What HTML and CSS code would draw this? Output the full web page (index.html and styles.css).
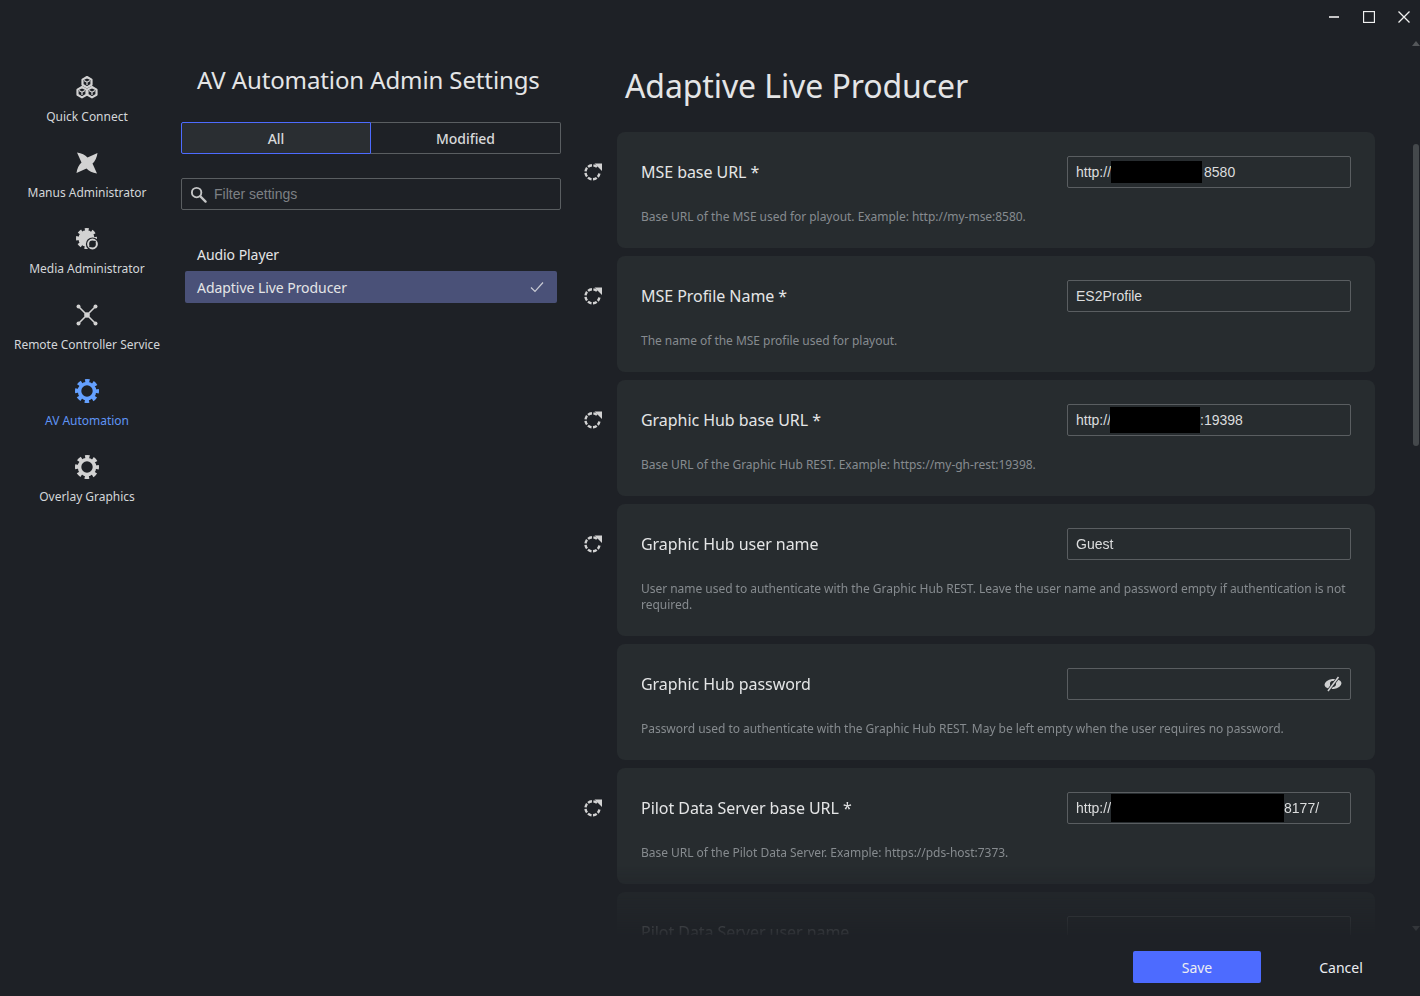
FILE: index.html
```html
<!DOCTYPE html>
<html lang="en">
<head>
  <meta charset="UTF-8">
  <title>AV Automation Admin Settings</title>
  <link rel="stylesheet" href="styles.css">
</head>
<body>

<svg class="defs" width="0" height="0">
  <symbol id="gear" viewBox="0 0 24 24">
    <circle cx="12" cy="12" r="7.5" fill="none" stroke="currentColor" stroke-width="3.6"/>
    <circle cx="12" cy="12" r="10.2" fill="none" stroke="currentColor" stroke-width="3.6" stroke-dasharray="4.4 3.61" stroke-dashoffset="2.2"/>
  </symbol>
  <symbol id="reset" viewBox="0 0 18 18">
    <path d="M13 3.9A7 7 0 1 0 15.4 10.5" fill="none" stroke="currentColor" stroke-width="2.4" stroke-dasharray="4 1.4"/>
    <path d="M10.500 0.500H18V8Z" fill="currentColor"/>
  </symbol>
</svg>

<div class="window">
  <div class="titlebar">
    <svg class="win-btn" viewBox="0 0 12 12"><path d="M1 6H11" stroke-width="1.6"/></svg>
    <svg class="win-btn" viewBox="0 0 12 12"><rect x="0.5" y="0.5" width="11" height="11"/></svg>
    <svg class="win-btn" viewBox="0 0 12 12"><path d="M0.5 0.5L11.5 11.5M11.5 0.5L0.5 11.5"/></svg>
  </div>

  <div class="content">
    <!-- Navegacion -->
    <nav class="nav">
      <div class="nav-item">
        <svg class="nav-icon" viewBox="0 0 24 24">
          <g fill="none" stroke="currentColor" stroke-width="2.2" stroke-linejoin="round">
            <path d="M12 2L16.5 4.6V9.8L12 12.4L7.5 9.8V4.6Z"/>
            <path d="M7 12L11.5 14.6V19.8L7 22.4L2.5 19.8V14.6Z"/>
            <path d="M17 12L21.5 14.6V19.8L17 22.4L12.5 19.8V14.6Z"/>
            <path d="M9 5.5L12 7.2L15 5.5M12 7.2V10M4 15.5L7 17.2L10 15.5M7 17.2V20M14 15.5L17 17.2L20 15.5M17 17.2V20" stroke-width="1.2"/>
          </g>
        </svg>
        <span>Quick Connect</span>
      </div>
      <div class="nav-item">
        <svg class="nav-icon" viewBox="0 0 24 24">
          <path fill="currentColor" d="M2 1.500Q9 2.500 12.500 6.500L22.500 2Q21.500 9 17.500 12.500L22 22.500Q15 21.500 11.500 17.500L1.500 22Q2.500 15 6.500 11.500Z"/>
        </svg>
        <span>Manus Administrator</span>
      </div>
      <div class="nav-item">
        <svg class="nav-icon" viewBox="0 0 24 24">
          <use href="#gear" width="21" height="21" x="1" y="1"/>
          <circle cx="11.500" cy="11.500" r="7" fill="currentColor"/>
          <circle cx="17.500" cy="17" r="6.600" fill="#1e2126"/>
          <circle cx="17.500" cy="17" r="4.400" fill="none" stroke="currentColor" stroke-width="2"/>
          <path d="M14.500 20L20.500 14" stroke="#1e2126" stroke-width="1.400"/>
        </svg>
        <span>Media Administrator</span>
      </div>
      <div class="nav-item">
        <svg class="nav-icon" viewBox="0 0 24 24">
          <path d="M3 3L21 21M21 3L3 21" stroke="currentColor" stroke-width="1.6"/>
          <circle cx="12" cy="12" r="2.8" fill="currentColor"/>
          <circle cx="3.5" cy="3.5" r="2" fill="currentColor"/>
          <circle cx="20.5" cy="3.5" r="2" fill="currentColor"/>
          <circle cx="3.5" cy="20.5" r="2" fill="currentColor"/>
          <circle cx="20.5" cy="20.5" r="2" fill="currentColor"/>
        </svg>
        <span>Remote Controller Service</span>
      </div>
      <div class="nav-item active">
        <svg class="nav-icon"><use href="#gear"/></svg>
        <span>AV Automation</span>
      </div>
      <div class="nav-item">
        <svg class="nav-icon"><use href="#gear"/></svg>
        <span>Overlay Graphics</span>
      </div>
    </nav>

    <!-- Lista de categorias -->
    <aside class="side">
      <h2 class="side-title">AV Automation Admin Settings</h2>
      <div class="tabs">
        <button class="tab selected">All</button>
        <button class="tab">Modified</button>
      </div>
      <div class="filter">
        <svg class="filter-icon" viewBox="0 0 18 18">
          <circle cx="7" cy="7" r="5" fill="none" stroke="currentColor" stroke-width="2"/>
          <path d="M11 11L16.5 16.5" stroke="currentColor" stroke-width="2.4" stroke-linecap="round"/>
        </svg>
        <span>Filter settings</span>
      </div>
      <ul class="cat-list">
        <li class="cat">Audio Player</li>
        <li class="cat selected">
          Adaptive Live Producer
          <svg class="check" viewBox="0 0 14 12"><path d="M1 6.5L5 10.5L13 1.5"/></svg>
        </li>
      </ul>
    </aside>

    <!-- Ajustes -->
    <main class="main">
      <h1 class="main-title">Adaptive Live Producer</h1>
      <div class="rows">

        <div class="row">
          <div class="reset"><svg><use href="#reset"/></svg></div>
          <div class="card">
            <div class="card-head">
              <label>MSE base URL *</label>
              <div class="input">http://<span class="mask mask-a"></span>8580</div>
            </div>
            <p class="desc">Base URL of the MSE used for playout. Example: http://my-mse:8580.</p>
          </div>
        </div>

        <div class="row">
          <div class="reset"><svg><use href="#reset"/></svg></div>
          <div class="card">
            <div class="card-head">
              <label>MSE Profile Name *</label>
              <div class="input">ES2Profile</div>
            </div>
            <p class="desc">The name of the MSE profile used for playout.</p>
          </div>
        </div>

        <div class="row">
          <div class="reset"><svg><use href="#reset"/></svg></div>
          <div class="card">
            <div class="card-head">
              <label>Graphic Hub base URL *</label>
              <div class="input">http://<span class="mask mask-b"></span>:19398</div>
            </div>
            <p class="desc">Base URL of the Graphic Hub REST. Example: https://my-gh-rest:19398.</p>
          </div>
        </div>

        <div class="row">
          <div class="reset"><svg><use href="#reset"/></svg></div>
          <div class="card">
            <div class="card-head">
              <label>Graphic Hub user name</label>
              <div class="input">Guest</div>
            </div>
            <p class="desc">User name used to authenticate with the Graphic Hub REST. Leave the user name and password empty if authentication is not required.</p>
          </div>
        </div>

        <div class="row">
          <div class="reset"></div>
          <div class="card">
            <div class="card-head">
              <label>Graphic Hub password</label>
              <div class="input input-pass">
                <svg class="eye" viewBox="0 0 18 16">
                  <g transform="rotate(-8 9 8)">
                    <ellipse cx="9" cy="8" rx="8.5" ry="5" fill="currentColor"/>
                    <circle cx="9" cy="8" r="3" fill="#272c2f"/>
                  </g>
                  <path d="M14.5 1L4 15" stroke="#272c2f" stroke-width="3"/>
                  <path d="M14.5 1L4 15" stroke="currentColor" stroke-width="1.5"/>
                </svg>
              </div>
            </div>
            <p class="desc">Password used to authenticate with the Graphic Hub REST. May be left empty when the user requires no password.</p>
          </div>
        </div>

        <div class="row">
          <div class="reset"><svg><use href="#reset"/></svg></div>
          <div class="card">
            <div class="card-head">
              <label>Pilot Data Server base URL *</label>
              <div class="input">http://<span class="mask mask-c"></span>8177/</div>
            </div>
            <p class="desc">Base URL of the Pilot Data Server. Example: https://pds-host:7373.</p>
          </div>
        </div>

        <div class="row">
          <div class="reset"></div>
          <div class="card">
            <div class="card-head">
              <label>Pilot Data Server user name</label>
              <div class="input"></div>
            </div>
          </div>
        </div>

      </div>
    </main>

    <div class="scrollbar">
      <span class="arrow up"></span>
      <span class="thumb"></span>
      <span class="arrow down"></span>
    </div>
  </div>

  <div class="footer">
    <button class="btn-save">Save</button>
    <button class="btn-cancel">Cancel</button>
  </div>
</div>

</body>
</html>
```

FILE: styles.css
```css
:root {
  --color-bg: #1e2126;
  --color-card: #272c2f;
  --color-text: #e4e5e6;
  --color-muted: #868b8f;
  --color-border: #5a5e61;
  --color-icon: #d2d2d2;
  --color-accent: #4d6bff;
  --color-active: #5f94f5;
}

* {
  box-sizing: border-box;
}

html, body {
  margin: 0;
  height: 100%;
  overflow: hidden;
}

body {
  font-family: "Noto Sans", "Open Sans", sans-serif;
  background-color: var(--color-bg);
  color: var(--color-text);
}

.defs {
  position: absolute;
}

.window {
  height: 996px;
  display: flex;
  flex-direction: column;
}

.titlebar {
  height: 34px;
  flex: none;
  display: flex;
  justify-content: flex-end;
  align-items: flex-start;
  gap: 23px;
  padding: 11px 10px 0 0;
}

.win-btn {
  width: 12px;
  height: 12px;
  fill: none;
  stroke: #f0f0f0;
  stroke-width: 1.3;
}

.content {
  flex: 1;
  min-height: 0;
  display: flex;
}

/* Navegacion */
.nav {
  width: 174px;
  flex: none;
  padding-top: 41px;
}

.nav-item {
  height: 76px;
  display: flex;
  flex-direction: column;
  align-items: center;
  font-size: 12px;
  line-height: 16px;
  letter-spacing: -0.02px;
  color: #d3d6d9;
  white-space: nowrap;
}

.nav-item span {
  margin-top: 10px;
}

.nav-icon {
  width: 24px;
  height: 24px;
  color: var(--color-icon);
}

.nav-item.active {
  color: var(--color-active);
}

.nav-item.active .nav-icon {
  color: #64a0ff;
}

/* Lista de categorias */
.side {
  width: 407px;
  flex: none;
  padding: 0 20px 0 7px;
}

.side-title {
  margin: 28px 0 0 16px;
  font-size: 24px;
  font-weight: 400;
  line-height: 36px;
  letter-spacing: -0.11px;
  white-space: nowrap;
}

.tabs {
  display: flex;
  margin-top: 24px;
  height: 32px;
}

.tab {
  flex: 0 0 50%;
  font-family: inherit;
  font-size: 14px;
  font-weight: 500;
  letter-spacing: -0.04px;
  color: #d8d9da;
  background: none;
  border: 1px solid var(--color-border);
  border-radius: 0 2px 2px 0;
  border-left: none;
}

.tab.selected {
  background-color: #2a2e32;
  border: 1px solid var(--color-accent);
  border-radius: 2px 0 0 2px;
}

.filter {
  display: flex;
  align-items: center;
  height: 32px;
  margin-top: 24px;
  padding-left: 8px;
  gap: 7px;
  border: 1px solid var(--color-border);
  border-radius: 2px;
  font-family: "Liberation Sans", Arial, sans-serif;
  font-size: 14px;
  color: #7d8084;
}

.filter-icon {
  width: 17px;
  height: 17px;
  color: #c4c5c6;
}

.cat-list {
  list-style: none;
  margin: 28px 4px 0;
  padding: 0;
}

.cat {
  height: 33px;
  padding: 0 13px 1px 12px;
  display: flex;
  align-items: center;
  justify-content: space-between;
  font-size: 14px;
  letter-spacing: -0.05px;
}

.cat.selected {
  height: 32px;
  padding-bottom: 0;
  background-color: #4a5178;
  border-radius: 2px;
}

.check {
  width: 14px;
  height: 12px;
  fill: none;
  stroke: #c9cbd4;
  stroke-width: 1.2;
}

/* Ajustes */
.main {
  width: 831px;
  flex: none;
  display: flex;
  flex-direction: column;
  min-height: 0;
  padding-right: 37px;
}

.main-title {
  margin: 28px 0 22px 44px;
  flex: none;
  font-size: 32px;
  font-weight: 400;
  line-height: 48px;
  letter-spacing: -0.1px;
  white-space: nowrap;
}

.rows {
  flex: 1;
  min-height: 0;
  overflow: hidden;
  -webkit-mask-image: linear-gradient(to bottom, #000 calc(100% - 70px), rgba(0, 0, 0, 0.5) calc(100% - 43px), rgba(0, 0, 0, 0.06) 100%);
  mask-image: linear-gradient(to bottom, #000 calc(100% - 70px), rgba(0, 0, 0, 0.5) calc(100% - 43px), rgba(0, 0, 0, 0.06) 100%);
}

.row {
  display: flex;
  margin-bottom: 8px;
}

.reset {
  width: 36px;
  flex: none;
  padding: 31px 0 0 3px;
  color: var(--color-icon);
}

.reset svg {
  display: block;
  width: 18px;
  height: 18px;
}

.card {
  flex: 1;
  padding: 24px 24px 23px;
  background-color: var(--color-card);
  border-radius: 8px;
}

.card-head {
  display: flex;
  justify-content: space-between;
  align-items: center;
  height: 32px;
}

.card-head label {
  font-size: 16px;
  letter-spacing: -0.05px;
}

.input {
  width: 284px;
  height: 32px;
  flex: none;
  display: flex;
  align-items: center;
  padding-left: 8px;
  border: 1px solid var(--color-border);
  border-radius: 2px;
  font-family: "Liberation Sans", Arial, sans-serif;
  font-size: 14px;
  color: #dcddde;
}

.input-pass {
  justify-content: flex-end;
  padding-right: 8px;
}

.eye {
  width: 18px;
  height: 16px;
  color: #cfd0d1;
}

.mask {
  flex: none;
  background-color: #000;
}

.mask-a {
  width: 91px;
  height: 22px;
  margin: -1px 2px 0 0;
}

.mask-b {
  width: 90px;
  height: 26px;
  margin-left: -1px;
}

.mask-c {
  width: 173px;
  height: 28px;
}

.desc {
  margin: 21px 0 0;
  font-size: 12px;
  line-height: 16px;
  letter-spacing: -0.03px;
  color: var(--color-muted);
}

/* Barra de scroll */
.scrollbar {
  width: 8px;
  flex: none;
  display: flex;
  flex-direction: column;
  align-items: center;
  padding-top: 7px;
}

.arrow {
  width: 0;
  height: 0;
  border-left: 4px solid transparent;
  border-right: 4px solid transparent;
}

.arrow.up {
  border-bottom: 5px solid #54575a;
}

.arrow.down {
  margin-top: auto;
  margin-bottom: 4px;
  border-top: 5px solid #33363a;
}

.thumb {
  width: 6px;
  height: 302px;
  margin-top: 98px;
  background-color: #44484b;
  border-radius: 3px;
}

/* Pie */
.footer {
  height: 61px;
  flex: none;
  display: flex;
  justify-content: flex-end;
  align-items: flex-start;
  gap: 16px;
  padding: 16px 15px 0 0;
}

.footer button {
  width: 128px;
  height: 32px;
  border: none;
  border-radius: 2px;
  font-family: inherit;
  font-size: 14px;
  color: #eceef2;
  background: none;
}

.footer .btn-save {
  background-color: var(--color-accent);
}
```
